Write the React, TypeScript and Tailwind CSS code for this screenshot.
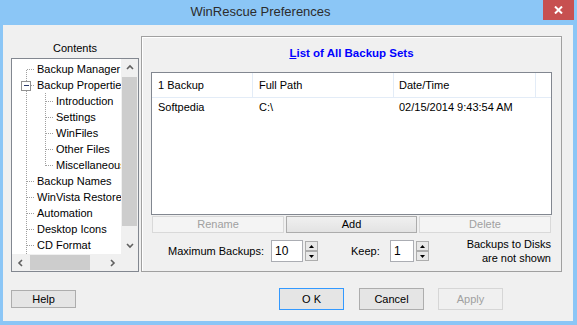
import React from "react";

const tree: { label: string; level: number }[] = [
  { label: "Backup Manager", level: 0 },
  { label: "Backup Properties", level: 0 },
  { label: "Introduction", level: 1 },
  { label: "Settings", level: 1 },
  { label: "WinFiles", level: 1 },
  { label: "Other Files", level: 1 },
  { label: "Miscellaneous", level: 1 },
  { label: "Backup Names", level: 0 },
  { label: "WinVista Restore", level: 0 },
  { label: "Automation", level: 0 },
  { label: "Desktop Icons", level: 0 },
  { label: "CD Format", level: 0 },
  { label: "Advanced", level: 0 },
];

function Chevron({ dir }: { dir: "up" | "down" | "left" | "right" }) {
  const d = {
    up: "M1 5 L4 2 L7 5",
    down: "M1 2 L4 5 L7 2",
    left: "M5 1 L2 4 L5 7",
    right: "M2 1 L5 4 L2 7",
  }[dir];
  return (
    <svg width="8" height="8" viewBox="0 0 8 8">
      <path d={d} fill="none" stroke="#606060" strokeWidth="1.6" />
    </svg>
  );
}

function TreeLines() {
  // row centres relative to the content box: 10 + 16 * i
  const c = (i: number) => 10 + 16 * i + 0.5;
  const top = [0, 1, 7, 8, 9, 10, 11, 12];
  const sub = [2, 3, 4, 5, 6];
  return (
    <svg className="absolute left-0 top-0" width="109" height="195" shapeRendering="crispEdges">
      <g stroke="#a0a0a0" strokeDasharray="1 1" strokeWidth="1">
        <line x1="14.5" y1={c(0)} x2="14.5" y2={c(1) - 4} />
        <line x1="14.5" y1={c(1) + 5} x2="14.5" y2="195" />
        {top.map((i) => (
          <line key={i} x1={i === 1 ? 19 : 15} y1={c(i)} x2="23" y2={c(i)} />
        ))}
        <line x1="33.5" y1={c(1) + 7} x2="33.5" y2={c(6)} />
        {sub.map((i) => (
          <line key={i} x1="34" y1={c(i)} x2="42" y2={c(i)} />
        ))}
      </g>
      <rect x="9.5" y={c(1) - 4.5} width="9" height="9" fill="#fff" stroke="#919191" />
      <line x1="11.5" y1={c(1)} x2="17" y2={c(1)} stroke="#2b3a6b" />
    </svg>
  );
}

function Spin() {
  return (
    <div className="ml-[2px] flex h-[22px] w-[13px] flex-col justify-between py-[1px]">
      <div className="flex h-[10px] items-center justify-center border border-[#adadad] bg-[#e8e8e8]">
        <svg width="5" height="3" viewBox="0 0 5 3">
          <path d="M0 3 L2.5 0 L5 3 Z" fill="#000" />
        </svg>
      </div>
      <div className="flex h-[10px] items-center justify-center border border-[#adadad] bg-[#e8e8e8]">
        <svg width="5" height="3" viewBox="0 0 5 3">
          <path d="M0 0 L2.5 3 L5 0 Z" fill="#000" />
        </svg>
      </div>
    </div>
  );
}

export default function App() {
  return (
    <div className="flex h-[325px] w-[577px] flex-col bg-[#8bc6f6] font-['Liberation_Sans',Arial,sans-serif] text-[11px] text-black">
      {/* Title bar */}
      <div className="relative flex h-[25px] shrink-0 items-center justify-center pb-[1px] pr-[56px]">
        <span className="text-[13px] text-[#2c2c2c]">WinRescue Preferences</span>
        <div className="absolute right-[3px] top-0 flex h-[20px] w-[31px] items-center justify-center bg-[#c75050]">
          <svg width="9" height="8" viewBox="0 0 9 8">
            <path d="M1 0.5 L8 7.5 M8 0.5 L1 7.5" stroke="#fff" strokeWidth="2" />
          </svg>
        </div>
      </div>

      {/* Client */}
      <div className="mb-[4px] ml-[3px] mr-[4px] flex flex-1 flex-col bg-[#f0f0f0]">
        <div className="flex items-start pl-[8px] pt-[11px]">
          {/* Contents tree */}
          <div className="flex w-[128px] flex-col">
            <div className="flex h-[22px] items-center justify-center pt-[2px]">Contents</div>
            <div className="flex h-[214px] flex-col border border-[#828790] bg-white">
              <div className="flex h-[195px]">
                <div className="relative w-[109px] overflow-hidden whitespace-nowrap pt-[2px]">
                  <TreeLines />
                  {tree.map((t) => (
                    <div
                      key={t.label}
                      className={`relative flex h-[16px] items-center ${t.level === 0 ? "pl-[25px]" : "pl-[44px]"}`}
                    >
                      {t.label}
                    </div>
                  ))}
                </div>
                <div className="flex w-[17px] flex-col bg-[#f0f0f0]">
                  <div className="flex h-[17px] items-center justify-center">
                    <Chevron dir="up" />
                  </div>
                  <div className="flex-1 px-[1px] pt-[1px]">
                    <div className="h-[149px] bg-[#cdcdcd]" />
                  </div>
                  <div className="flex h-[17px] items-center justify-center">
                    <Chevron dir="down" />
                  </div>
                </div>
              </div>
              <div className="flex h-[17px] bg-[#f0f0f0]">
                <div className="flex w-[17px] items-center justify-center">
                  <Chevron dir="left" />
                </div>
                <div className="flex w-[75px] py-[1px] pl-[1px]">
                  <div className="w-[60px] bg-[#cdcdcd]" />
                </div>
                <div className="flex w-[17px] items-center justify-center">
                  <Chevron dir="right" />
                </div>
                <div className="w-[17px]" />
              </div>
            </div>
          </div>

          {/* Backup sets panel */}
          <div className="ml-[2px] flex h-[236px] w-[421px] flex-col border border-[#a0a0a0] shadow-[inset_1px_1px_0_#fff]">
            <div className="flex h-[35px] items-center justify-center pb-[1px] text-[11.5px] font-bold text-[#0000ff]">
              <span>
                <span className="underline">L</span>ist of All Backup Sets
              </span>
            </div>
            <div className="ml-[9px] flex h-[143px] w-[401px] flex-col border border-[#828790] bg-white">
              <div className="flex h-[25px] border-b border-[#e3ecf7]">
                <div className="flex w-[101px] items-center border-r border-[#e3ecf7] pl-[6px]">1 Backup</div>
                <div className="flex w-[141px] items-center border-r border-[#e3ecf7] pl-[6px]">Full Path</div>
                <div className="flex w-[142px] items-center border-r border-[#e3ecf7] pl-[5px]">Date/Time</div>
              </div>
              <div className="flex h-[19px] items-center">
                <div className="w-[101px] pl-[6px]">Softpedia</div>
                <div className="w-[141px] pl-[6px]">C:\</div>
                <div className="w-[142px] pl-[5px]">02/15/2014 9:43:54 AM</div>
              </div>
            </div>

            <div className="ml-[10px] mt-[1px] flex gap-[2px]">
              <div className="flex h-[17px] w-[132px] items-center justify-center border border-[#d9d9d9] bg-[#f4f4f4] text-[#a0a0a0]">
                Rename
              </div>
              <div className="flex h-[17px] w-[131px] items-center justify-center border border-[#acacac] bg-gradient-to-b from-[#f0f0f0] to-[#e3e3e3]">
                Add
              </div>
              <div className="flex h-[17px] w-[132px] items-center justify-center border border-[#d9d9d9] bg-[#f4f4f4] text-[#a0a0a0]">
                Delete
              </div>
            </div>

            <div className="mt-[6px] flex h-[24px] items-center">
              <span className="ml-[26px] w-[103px]">Maximum Backups:</span>
              <div className="flex h-[22px] w-[32px] items-center border border-[#abadb3] bg-white pl-[3px] text-[12px]">10</div>
              <Spin />
              <span className="ml-[33px] w-[39px]">Keep:</span>
              <div className="flex h-[22px] w-[24px] items-center border border-[#abadb3] bg-white pl-[3px] text-[12px]">1</div>
              <Spin />
              <div className="ml-auto mr-[10px] flex flex-col items-end leading-[14px]">
                <span>Backups to Disks</span>
                <span>are not shown</span>
              </div>
            </div>
          </div>
        </div>

        {/* Dialog buttons */}
        <div className="mt-[16px] flex h-[22px] items-center pl-[8px]">
          <div className="flex h-[18px] w-[65px] items-center justify-center border border-[#adadad] bg-[#e5e5e5]">Help</div>
          <div className="ml-[203px] flex h-[22px] w-[65px] items-center justify-center border border-[#3399ff] bg-[#e5e5e5]">
            O K
          </div>
          <div className="ml-[15px] flex h-[22px] w-[65px] items-center justify-center border border-[#adadad] bg-[#e5e5e5]">
            Cancel
          </div>
          <div className="ml-[14px] flex h-[22px] w-[65px] items-center justify-center border border-[#d6d6d6] bg-[#f0f0f0] text-[#a0a0a0]">
            Apply
          </div>
        </div>
      </div>
    </div>
  );
}
